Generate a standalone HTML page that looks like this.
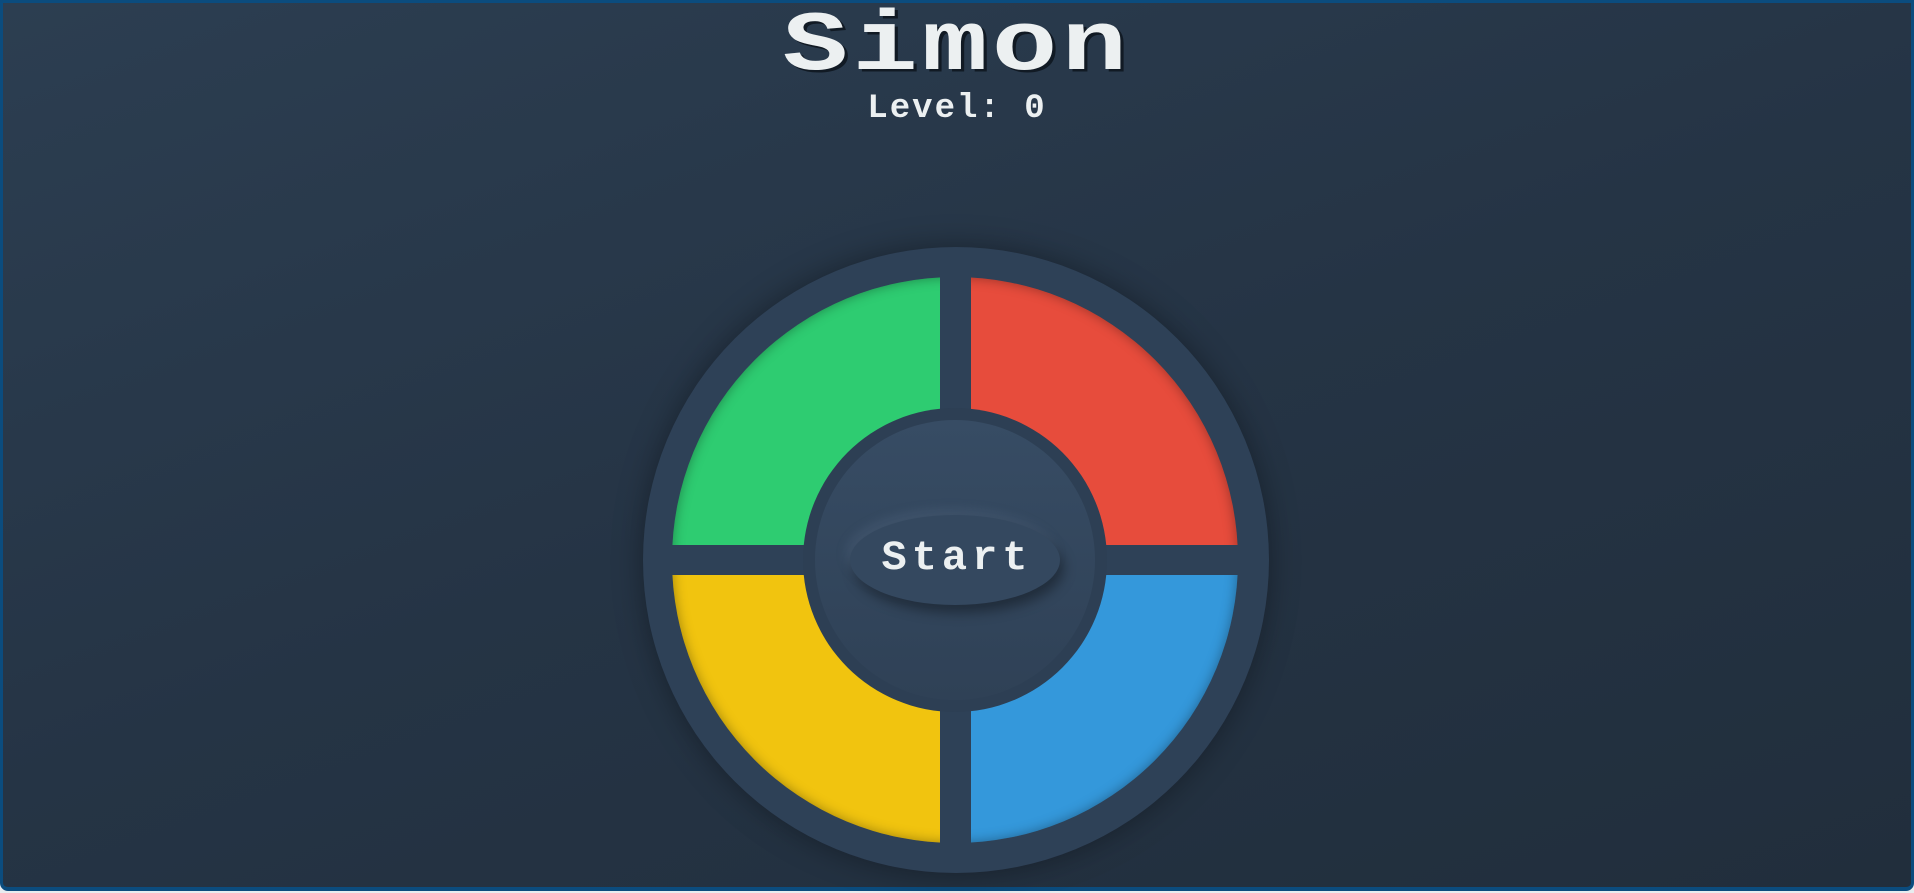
<!DOCTYPE html>
<html><head><style>
html,body{margin:0;padding:0;width:1914px;height:893px;overflow:hidden;background:#e8ecef}
.frame{position:absolute;left:0;top:0;width:1908px;height:884px;border:3px solid #0b4c7e;border-bottom-width:4px;border-radius:0 0 8px 8px;background:linear-gradient(160deg,#2c3e51 0%,#253445 50%,#212e3c 100%);overflow:hidden}
.t{position:absolute;left:0;width:1914px;text-align:center;font-family:"Liberation Mono",monospace;font-weight:bold;color:#ecf0f1}
.title{top:6px;font-size:100px;line-height:100px;letter-spacing:4px;text-shadow:3px 3px 0 #111a24;transform:scale(1.09,0.84);transform-origin:50% 0}
.lvl{top:90px;font-size:34px;letter-spacing:2px}
.c{position:absolute;border-radius:50%}
.bar{position:absolute;background:#2e4157}
</style></head><body>
<div class="frame"></div>
<div class="t title">Simon</div>
<div class="t lvl">Level: 0</div>
<div class="c" style="left:643px;top:247px;width:626px;height:626px;background:#2e4157;box-shadow:0 0 30px rgba(0,0,0,.35)"></div>
<div class="c" style="left:672px;top:277px;width:566px;height:566px;background:conic-gradient(#e74c3c 0 90deg,#3498db 90deg 180deg,#f1c40f 180deg 270deg,#2ecc71 270deg 360deg);box-shadow:inset 0 0 12px rgba(0,0,0,.35)"></div>
<div class="bar" style="left:940px;top:270px;width:31px;height:580px"></div>
<div class="bar" style="left:665px;top:545px;width:580px;height:30px"></div>
<div class="c" style="left:803px;top:408px;width:304px;height:304px;background:#2d3f54"></div>
<div class="c" style="left:815px;top:420px;width:280px;height:280px;background:linear-gradient(180deg,#374c64,#2f4156)"></div>
<div class="c" style="left:850px;top:515px;width:210px;height:90px;background:#34485f;box-shadow:4px 8px 12px rgba(0,0,0,.35),-4px -6px 10px rgba(90,110,135,.3)"></div>
<div class="t" style="top:534px;font-size:42px;letter-spacing:5px">Start</div>
</body></html>
